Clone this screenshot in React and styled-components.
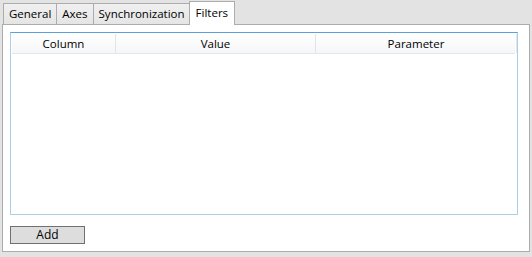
import styled, { createGlobalStyle } from 'styled-components'

const GlobalStyle = createGlobalStyle`
  html, body {
    margin: 0;
    padding: 0;
    background: #e3e3e3;
  }
  body {
    font-family: 'Segoe UI', 'Open Sans', 'Liberation Sans', sans-serif;
    font-size: 11.5px;
    color: #000000;
  }
`

const Window = styled.div`
  width: 532px;
  height: 257px;
  box-sizing: border-box;
  padding: 1px 2px 5px 2px;
  display: flex;
  flex-direction: column;
`

const TabStrip = styled.div`
  display: flex;
  align-items: flex-end;
  height: 23px;
  padding-left: 1px;
  position: relative;
  z-index: 1;
`

const Tab = styled.div`
  box-sizing: border-box;
  height: ${({ $active }) => ($active ? '24px' : '21px')};
  padding: 0 ${({ $active }) => ($active ? '6px' : '5px')};
  margin-left: ${({ $active }) => ($active ? '-2px' : '0')};
  margin-right: ${({ $active }) => ($active ? '-2px' : '0')};
  margin-bottom: ${({ $active }) => ($active ? '-1px' : '0')};
  border: 1px solid #acacac;
  border-bottom: none;
  border-left-width: ${({ $first, $active }) => ($first || $active ? '1px' : '0')};
  background: ${({ $active }) =>
    $active ? '#ffffff' : 'linear-gradient(#f0f0f0, #e5e5e5)'};
  display: flex;
  align-items: center;
  padding-bottom: ${({ $active }) => ($active ? '1px' : '0')};
  line-height: 1;
  white-space: nowrap;
  position: relative;
  z-index: ${({ $active }) => ($active ? 2 : 1)};
`

const Panel = styled.div`
  flex: 1;
  box-sizing: border-box;
  background: #ffffff;
  border: 1px solid #acacac;
  padding: 7px 11px 7px 7px;
  display: flex;
  flex-direction: column;
`

const Grid = styled.div`
  flex: 1;
  box-sizing: border-box;
  border: 1px solid #abd0e6;
  border-top-color: #5d9fd6;
  background: #ffffff;
  padding: 1px 2px 0 1px;
`

const HeaderRow = styled.div`
  display: grid;
  grid-template-columns: 104px 200px 201px;
  height: 19px;
  background: linear-gradient(#ffffff, #f5f6f8);
  border-bottom: 1px solid #e3e6ea;
`

const HeaderCell = styled.div`
  display: flex;
  align-items: center;
  justify-content: center;
  border-right: 1px solid #e2e4e7;
  line-height: 1;
`

const Footer = styled.div`
  display: flex;
  padding-top: 11px;
`

const Button = styled.button`
  box-sizing: border-box;
  width: 75px;
  height: 18px;
  padding: 0;
  background: #dddddd;
  border: 1px solid #707070;
  font: inherit;
  font-size: 12px;
  color: #000000;
  line-height: 1;
`

const tabs = ['General', 'Axes', 'Synchronization', 'Filters']
const columns = ['Column', 'Value', 'Parameter']

export default function App() {
  const active = 'Filters'
  return (
    <>
      <GlobalStyle />
      <Window>
        <TabStrip>
          {tabs.map((t, i) => (
            <Tab key={t} $active={t === active} $first={i === 0}>
              {t}
            </Tab>
          ))}
        </TabStrip>
        <Panel>
          <Grid>
            <HeaderRow>
              {columns.map((c) => (
                <HeaderCell key={c}>{c}</HeaderCell>
              ))}
            </HeaderRow>
          </Grid>
          <Footer>
            <Button>Add</Button>
          </Footer>
        </Panel>
      </Window>
    </>
  )
}
